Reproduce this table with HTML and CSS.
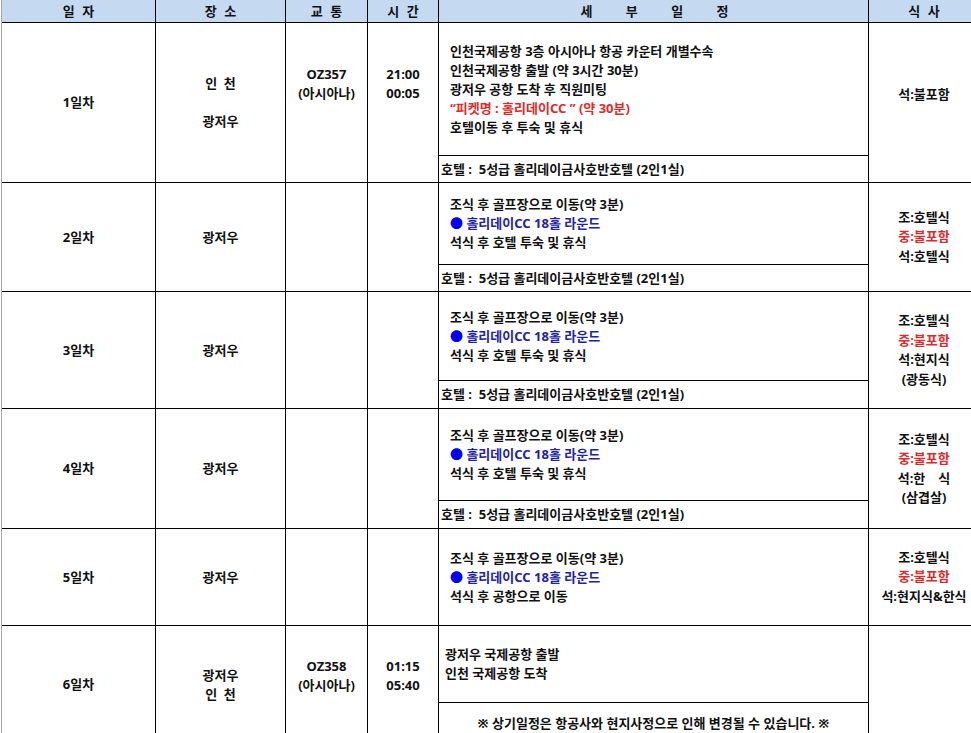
FILE: index.html
```html
<!DOCTYPE html>
<html lang="ko">
<head>
<meta charset="utf-8">
<title>일정표</title>
<link rel="stylesheet" href="styles.css">
</head>
<body>
<div class="sheet">
  <div class="grid">
    <div class="cell head">일 자</div>
    <div class="cell head">장 소</div>
    <div class="cell head">교 통</div>
    <div class="cell head">시 간</div>
    <div class="cell head wide">세 부 일 정</div>
    <div class="cell head">식 사</div>

    <!-- Day 1 -->
    <div class="cell span2">1일차</div>
    <div class="cell span2 place">인 천<br><br>광저우</div>
    <div class="cell span2 pad-d1">OZ357<br>(아시아나)</div>
    <div class="cell span2 pad-d1">21:00<br>00:05</div>
    <div class="cell sched">
      <div>인천국제공항 3층 아시아나 항공 카운터 개별수속</div>
      <div>인천국제공항 출발 (약 3시간 30분)</div>
      <div>광저우 공항 도착 후 직원미팅</div>
      <div class="red">“피켓명 : 홀리데이CC ” (약 30분)</div>
      <div>호텔이동 후 투숙 및 휴식</div>
    </div>
    <div class="cell span2 pad-m1">석:불포함</div>
    <div class="cell hotel">호텔 :&nbsp; 5성급 홀리데이금사호반호텔 (2인1실)</div>

    <!-- Day 2 -->
    <div class="cell span2">2일차</div>
    <div class="cell span2 place">광저우</div>
    <div class="cell span2"></div>
    <div class="cell span2"></div>
    <div class="cell sched">
      <div>조식 후 골프장으로 이동(약 3분)</div>
      <div class="blue"><span class="dot">●</span> 홀리데이CC 18홀 라운드</div>
      <div>석식 후 호텔 투숙 및 휴식</div>
    </div>
    <div class="cell span2 meal">
      <div>조:호텔식</div>
      <div class="red">중:불포함</div>
      <div>석:호텔식</div>
    </div>
    <div class="cell hotel">호텔 :&nbsp; 5성급 홀리데이금사호반호텔 (2인1실)</div>

    <!-- Day 3 -->
    <div class="cell span2">3일차</div>
    <div class="cell span2 place">광저우</div>
    <div class="cell span2"></div>
    <div class="cell span2"></div>
    <div class="cell sched">
      <div>조식 후 골프장으로 이동(약 3분)</div>
      <div class="blue"><span class="dot">●</span> 홀리데이CC 18홀 라운드</div>
      <div>석식 후 호텔 투숙 및 휴식</div>
    </div>
    <div class="cell span2 meal">
      <div>조:호텔식</div>
      <div class="red">중:불포함</div>
      <div>석:현지식</div>
      <div>(광동식)</div>
    </div>
    <div class="cell hotel">호텔 :&nbsp; 5성급 홀리데이금사호반호텔 (2인1실)</div>

    <!-- Day 4 -->
    <div class="cell span2">4일차</div>
    <div class="cell span2 place">광저우</div>
    <div class="cell span2"></div>
    <div class="cell span2"></div>
    <div class="cell sched">
      <div>조식 후 골프장으로 이동(약 3분)</div>
      <div class="blue"><span class="dot">●</span> 홀리데이CC 18홀 라운드</div>
      <div>석식 후 호텔 투숙 및 휴식</div>
    </div>
    <div class="cell span2 meal">
      <div>조:호텔식</div>
      <div class="red">중:불포함</div>
      <div>석:한　식</div>
      <div>(삼겹살)</div>
    </div>
    <div class="cell hotel">호텔 :&nbsp; 5성급 홀리데이금사호반호텔 (2인1실)</div>

    <!-- Day 5 -->
    <div class="cell">5일차</div>
    <div class="cell place">광저우</div>
    <div class="cell"></div>
    <div class="cell"></div>
    <div class="cell sched">
      <div>조식 후 골프장으로 이동(약 3분)</div>
      <div class="blue"><span class="dot">●</span> 홀리데이CC 18홀 라운드</div>
      <div>석식 후 공항으로 이동</div>
    </div>
    <div class="cell meal">
      <div>조:호텔식</div>
      <div class="red">중:불포함</div>
      <div>석:현지식&amp;한식</div>
    </div>

    <!-- Day 6 -->
    <div class="cell span2">6일차</div>
    <div class="cell span2 place">광저우<br>인 천</div>
    <div class="cell span2 pad-d6">OZ358<br>(아시아나)</div>
    <div class="cell span2 pad-d6">01:15<br>05:40</div>
    <div class="cell sched sched-narrow">
      <div>광저우 국제공항 출발</div>
      <div>인천 국제공항 도착</div>
    </div>
    <div class="cell span2"></div>
    <div class="cell note">※ 상기일정은 항공사와 현지사정으로 인해 변경될 수 있습니다. ※</div>
  </div>
</div>
</body>
</html>
```

FILE: styles.css
```css
html, body {
  margin: 0;
  padding: 0;
  overflow: hidden;
  background: #ffffff;
}

body {
  font-family: "Noto Sans", "Noto Sans CJK KR", sans-serif;
  font-size: 13px;
  font-weight: 700;
  color: #111111;
  line-height: 19px;
}

.sheet {
  width: 971px;
  height: 733px;
  overflow: hidden;
  padding-left: 1px;
  background: #ffffff;
}

.grid {
  display: grid;
  grid-template-columns: 153px 129px 81px 70px 429px 110px;
  grid-template-rows: 22px 132px 26px 81px 26px 88px 27px 91px 27px 96px 76px 40px;
  gap: 1px;
  background: #000000;
  border-left: 1px solid #a6a6a6;
  width: max-content;
}

.cell {
  background: #ffffff;
  display: flex;
  flex-direction: column;
  align-items: center;
  justify-content: center;
  text-align: center;
  white-space: nowrap;
}

.head {
  background: #c5d9f1;
  line-height: 20px;
  word-spacing: 4px;
}

.head.wide {
  word-spacing: 30px;
  padding-left: 2px;
}

.place {
  word-spacing: 3px;
}

.span2 {
  grid-row: span 2;
}

.pad-d1 {
  padding-bottom: 38px;
}

.pad-m1 {
  padding-bottom: 16px;
}

.pad-d6 {
  padding-bottom: 18px;
}

.sched {
  align-items: flex-start;
  text-align: left;
  padding-left: 11px;
}

.sched-narrow {
  padding-left: 6px;
}

.hotel {
  align-items: flex-start;
  padding-left: 2px;
}

.note {
  justify-content: center;
}

.meal {
  line-height: 19.5px;
}

.red {
  color: #dc2b2b;
}

.blue {
  color: #2222a8;
}

.dot {
  color: #0000ee;
}
```
